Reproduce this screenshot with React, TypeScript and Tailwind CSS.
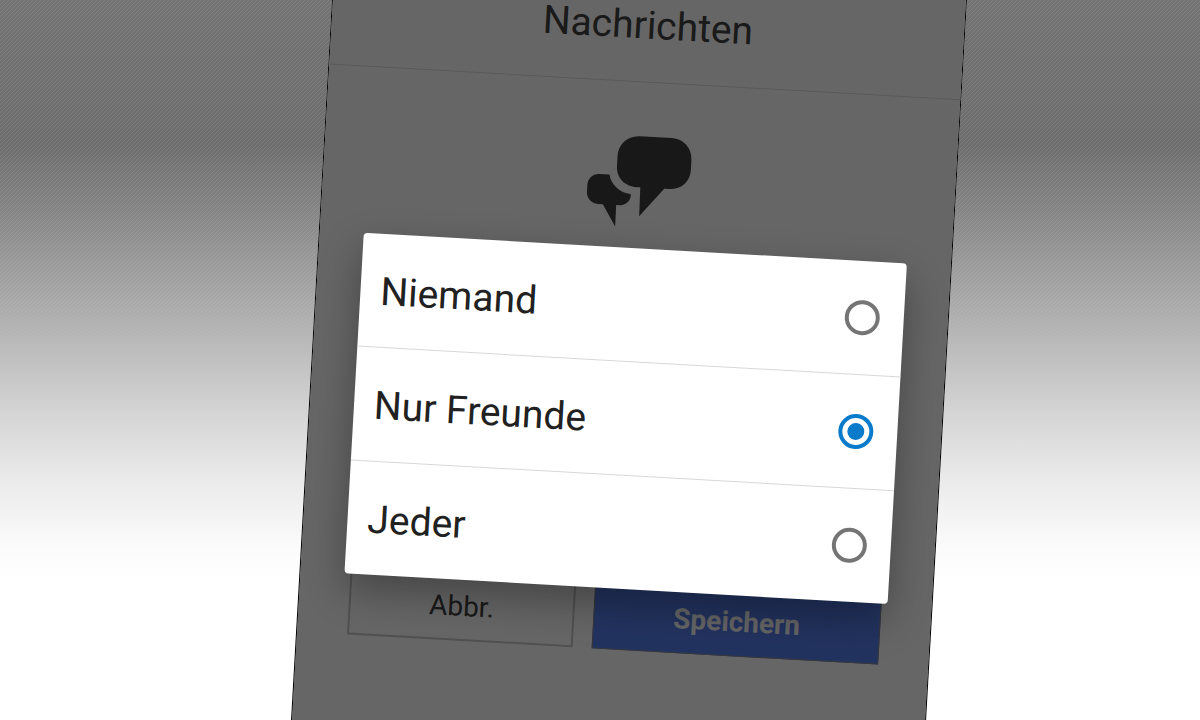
import { useState } from 'react'

const OPTIONS = ['Niemand', 'Nur Freunde', 'Jeder']

/* two overlapping speech bubbles */
const BubblesIcon = () => {
    return <svg className="w-[104px] h-[94px] fill-[#3e3e3e]" viewBox="-52 -46 104 94" aria-hidden="true">
        <path d="M-2 -45H30C42 -45 51 -36 51 -24V-14C51 -2 42 6 30 6H25.400L2 35L1.500 6H-2C-14 6 -23 -2 -23 -14V-24C-23 -36 -14 -45 -2 -45Z" />
        <path d="M-40 -5H-30C-28 5 -19 12.500 -7.500 13.500C-7 20 -12 25 -18 25H-21.600L-21.400 46.500L-35 25H-40C-46.500 25 -51.500 20 -51.500 13.500V6.500C-51.500 0 -46.500 -5 -40 -5Z" />
    </svg>
}

export default function App() {
    const [selected, setSelected] = useState('Nur Freunde')

    return <main className="relative h-screen overflow-hidden flex justify-center pl-[58px] font-['Roboto',sans-serif] bg-[linear-gradient(to_bottom,#737373_0%,#6d6d6d_20%,#848484_29%,#9e9e9e_38%,#bababa_48%,#d6d6d6_58%,#ebebeb_67%,#fbfbfb_76%,#ffffff_81%)]">
        {/* diagonal hatching, fades out downwards */}
        <div className="absolute inset-0 opacity-10 bg-size-[4px_4px] bg-[linear-gradient(135deg,white_12.5%,transparent_12.5%,transparent_50%,white_50%,white_62.5%,transparent_62.5%)] mask-[linear-gradient(to_bottom,black_0%,black_30%,transparent_65%)]" />

        {/* phone */}
        <div className="relative shrink-0 w-full max-w-[634px] -my-12 rotate-[3.25deg] border-x border-black bg-white text-[#414141]">
            <header className="h-[130px] flex items-end justify-center pb-[38px] border-b border-[#dedede]">
                <h1 className="text-[39px] leading-9">Nachrichten</h1>
            </header>

            <section className="h-[500px] flex justify-center pt-[53px]">
                <BubblesIcon />
            </section>

            {/* actions */}
            <div className="flex gap-[19px] px-[50px] text-[28px]">
                <button className="flex-7 h-[68px] border-2 border-[#c8c8c8]">Abbr.</button>
                <button className="flex-9 h-[68px] border border-[#8a8a8a] bg-[#5780f0] font-bold text-white">Speichern</button>
            </div>

            {/* dialog */}
            <div className="absolute inset-0 bg-black/60 flex justify-center items-start pt-[296px]">
                <div role="radiogroup" aria-label="Nachrichten" className="w-[544px] bg-white rounded-[4px] shadow-[0_16px_40px_rgba(0,0,0,0.32)] text-[#212121] divide-y divide-[#d8d8d8]">
                    {OPTIONS.map(option => (
                        <label key={option} className="h-[114px] last:h-[113px] flex items-center justify-between pl-5 pr-6 text-[39px] leading-12">
                            <span className="pt-0.5">{option}</span>
                            <input
                                type="radio"
                                name="messages"
                                value={option}
                                checked={selected === option}
                                onChange={() => setSelected(option)}
                                className="appearance-none grid place-items-center size-[35px] rounded-full border-4 border-[#757575] checked:border-[#0a7bcb] checked:before:content-[''] checked:before:size-[17px] checked:before:rounded-full checked:before:bg-[#0a7bcb]"
                            />
                        </label>
                    ))}
                </div>
            </div>
        </div>
    </main>
}
